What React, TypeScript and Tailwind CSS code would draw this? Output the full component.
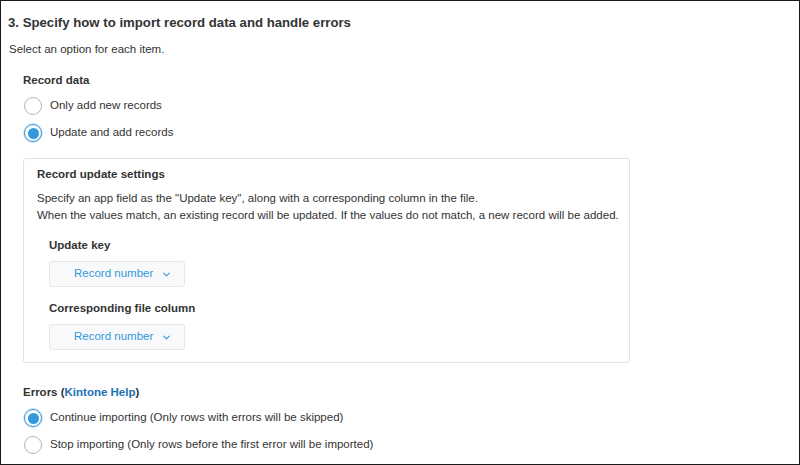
import { ChevronDown } from 'lucide-react'

function Radio({ checked, label }: { checked?: boolean; label: string }) {
  return (
    <label className="flex items-center gap-[8px] h-[26px]">
      {checked ? (
        <span className="w-[18px] h-[18px] rounded-full border-[1.5px] border-[#3498db] bg-white flex items-center justify-center shadow-[0_0_0_1px_#cfe5f7]">
          <span className="w-[11px] h-[11px] rounded-full bg-[#3498db]" />
        </span>
      ) : (
        <span className="w-[18px] h-[18px] rounded-full border border-[#b5b5b5] bg-white" />
      )}
      <span className="text-[11.5px] text-[#333]">{label}</span>
    </label>
  )
}

function Select({ value }: { value: string }) {
  return (
    <div className="w-[136px] h-[26px] bg-[#f7f9fa] border border-[#e3e7e8] rounded-[3px] flex items-center pl-[24px] gap-[8px]">
      <span className="text-[11.5px] text-[#3498db]">{value}</span>
      <ChevronDown className="w-[11px] h-[11px] text-[#3498db]" strokeWidth={2.5} />
    </div>
  )
}

export default function App() {
  return (
    <div className="w-[800px] h-[465px] bg-white border border-[#1a1a1a] font-['Liberation_Sans',Arial,sans-serif] text-[#333] overflow-hidden">
      <div className="pl-[7px] pt-[12px]">
        <h2 className="text-[13.2px] font-bold text-[#333] leading-[20px]">
          3. Specify how to import record data and handle errors
        </h2>
        <p className="text-[11.5px] leading-[17px] mt-[8px] ml-[1px]">Select an option for each item.</p>

        <div className="pl-[15px] mt-[14px]">
          <h3 className="text-[11.5px] font-bold leading-[17px]">Record data</h3>
          <div className="mt-[4px] flex flex-col gap-[1px] ml-[1px]">
            <Radio label="Only add new records" />
            <Radio checked label="Update and add records" />
          </div>

          <div className="mt-[12px] w-[607px] h-[205px] border border-[#e3e3e3] rounded-[3px] pl-[13px] pt-[7px]">
            <h4 className="text-[11.5px] font-bold leading-[17px]">Record update settings</h4>
            <p className="text-[11.5px] leading-[17px] mt-[7px]">
              Specify an app field as the "Update key", along with a corresponding column in the file.
              <br />
              When the values match, an existing record will be updated. If the values do not match, a new record will be added.
            </p>
            <div className="pl-[12px] mt-[13px]">
              <h5 className="text-[11.5px] font-bold leading-[17px]">Update key</h5>
              <div className="mt-[7px]">
                <Select value="Record number" />
              </div>
              <h5 className="text-[11.5px] font-bold leading-[17px] mt-[13px]">Corresponding file column</h5>
              <div className="mt-[7px]">
                <Select value="Record number" />
              </div>
            </div>
          </div>

          <h3 className="text-[11.5px] font-bold leading-[17px] mt-[21px]">
            Errors (<span className="text-[#1a6fb5]">Kintone Help</span>)
          </h3>
          <div className="mt-[4px] flex flex-col gap-[1px] ml-[1px]">
            <Radio checked label="Continue importing (Only rows with errors will be skipped)" />
            <Radio label="Stop importing (Only rows before the first error will be imported)" />
          </div>
        </div>
      </div>
    </div>
  )
}
